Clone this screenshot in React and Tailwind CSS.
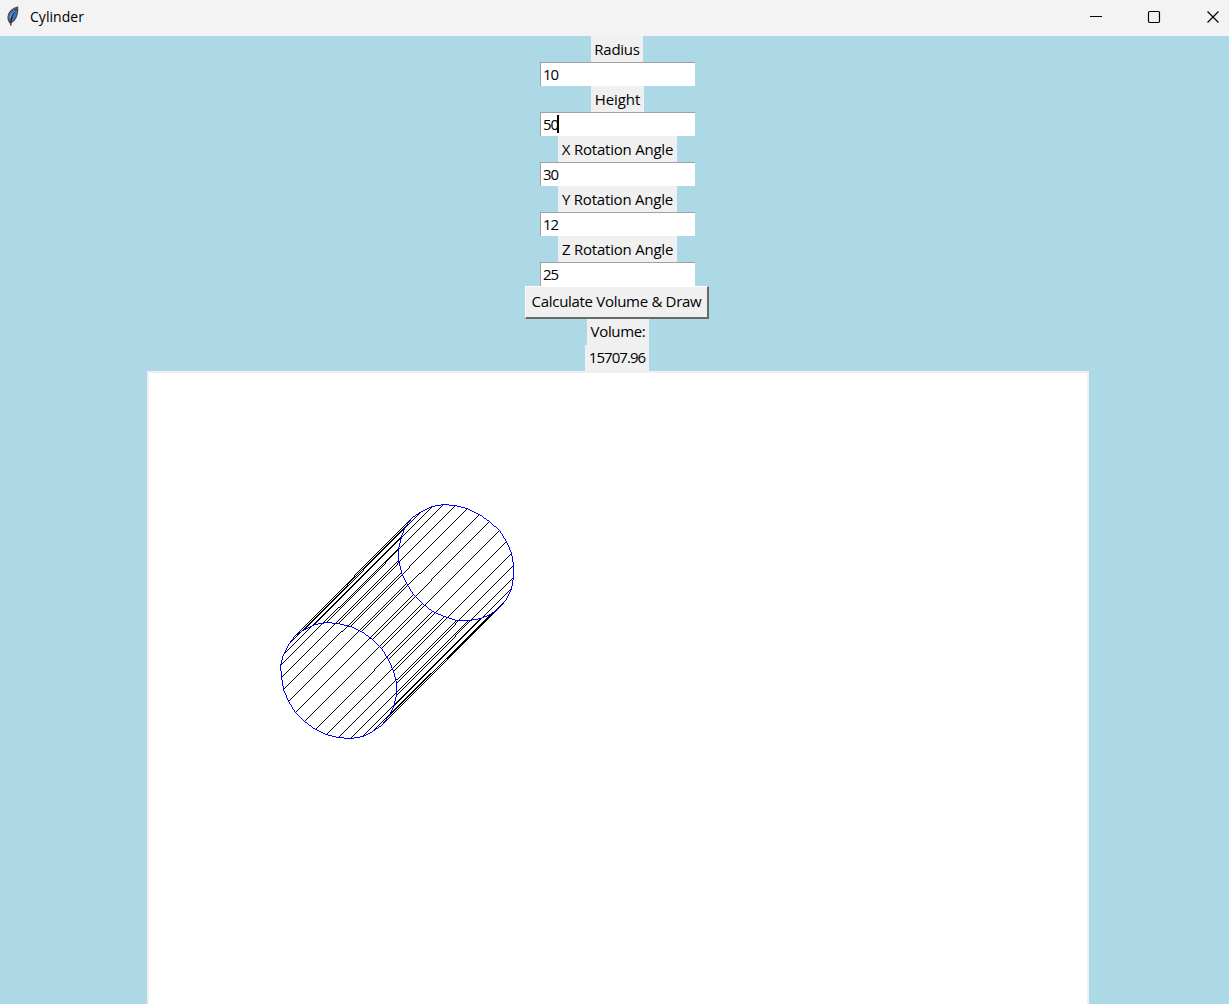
import React from "react";

const SEGMENTS = 30;
const MAJOR = 62.3;
const MINOR = 53.2;
const START = 1.2;

// Points of one end cap, its long axis lying on the falling diagonal.
function cap(cx, cy) {
  return Array.from({ length: SEGMENTS }, (_, i) => {
    const t = ((START + (i * 360) / SEGMENTS) * Math.PI) / 180;
    const u = MAJOR * Math.cos(t);
    const v = MINOR * Math.sin(t);
    return [Math.floor(cx + (u - v) / Math.SQRT2) + 0.5, Math.floor(cy + (u + v) / Math.SQRT2) + 0.5];
  });
}

const bottom = cap(189.6, 307.5);
const top = cap(307.2, 189.8);

// Unit squares along the pixel run from one point to the other.
function pixelRun([x1, y1], [x2, y2]) {
  const steps = Math.max(Math.abs(x2 - x1), Math.abs(y2 - y1));
  let d = "";
  for (let i = 0; i <= steps; i++) {
    const x = Math.round(x1 - 0.5 + ((x2 - x1) * i) / steps);
    const y = Math.round(y1 - 0.5 + ((y2 - y1) * i) / steps);
    d += `M${x} ${y}h1v1h-1z`;
  }
  return d;
}

const outline = (points) => points.map((p, i) => pixelRun(p, points[(i + 1) % points.length])).join("");

function Cylinder() {
  return (
    <svg width="938" height="640" shapeRendering="crispEdges" className="block">
      {bottom.map((p, i) => (
        <path key={i} d={pixelRun(p, top[i])} fill="#000" />
      ))}
      <path d={outline(bottom)} fill="#00f" />
      <path d={outline(top)} fill="#00f" />
    </svg>
  );
}

function Label({ box, text, children }) {
  return (
    <div className={"flex h-[26px] shrink-0 items-center justify-center bg-[#f0f0f0] whitespace-nowrap " + box}>
      <span className={text}>{children}</span>
    </div>
  );
}

function Entry({ value, caret }) {
  return (
    <div className="ml-px flex h-6 w-[155px] shrink-0 items-center border-t border-l border-[#a0a0a0] bg-white pb-px pl-[2px]">
      <span className="tracking-[-1px]">{value}</span>
      {caret && <span className="-ml-px h-[18px] w-[2px] bg-black" />}
    </div>
  );
}

export default function App() {
  return (
    <div className="flex h-[1004px] w-[1229px] flex-col overflow-hidden bg-[#add8e6] font-['Open_Sans',sans-serif] text-[15px] leading-[20px] text-black">
      <header className="flex h-9 shrink-0 items-center bg-[#f3f3f3]">
        <svg width="14" height="22" viewBox="0 0 14 22" className="ml-[6px] -mt-[3px]">
          <path d="M11.600 1.200C7 2 2.200 6 2 11c0 2 .6 4 1.500 5.500C7 16 10 12.500 11 8.500c.6-2.500.9-5 .6-7.300Z" fill="#3977bd" stroke="#554e4b" strokeWidth="1.300" />
          <path d="M10.500 3C6.500 7 4.500 12 4.800 19.500" fill="none" stroke="#222" strokeWidth="1.300" />
          <path d="M9.500 4.500C6.800 6.500 5 9 4.300 12" fill="none" stroke="#76b2ec" strokeWidth="1" />
        </svg>
        <span className="ml-[10px] flex-1 pb-[2px] text-[14px] tracking-[0.05px]">Cylinder</span>
        <div className="-mt-[2px] flex pr-[9px] text-black">
          <svg width="14" height="14" className="mr-[44px]">
            <path d="M1 6.500H13" stroke="currentColor" />
          </svg>
          <svg width="14" height="14" className="mr-[45px]">
            <rect x="1.500" y="1.500" width="11" height="11" rx="1.200" fill="none" stroke="currentColor" strokeWidth="1.200" />
          </svg>
          <svg width="14" height="14">
            <path d="M1.500 1.500L12.500 12.500M12.500 1.500L1.500 12.500" stroke="currentColor" strokeWidth="1.200" />
          </svg>
        </div>
      </header>

      <main className="flex w-[1234px] flex-col items-center">
        <Label box="w-[52px]" text="tracking-[-0.25px]">Radius</Label>
        <Entry value="10" />
        <Label box="w-[53px] -mr-px" text="tracking-[-0.1px]">Height</Label>
        <Entry value="50" caret />
        <Label box="w-[119px] -mr-px" text="tracking-[-0.22px]">X Rotation Angle</Label>
        <Entry value="30" />
        <Label box="w-[119px] -mr-px" text="tracking-[-0.22px]">Y Rotation Angle</Label>
        <Entry value="12" />
        <Label box="w-[119px] -mr-px" text="tracking-[-0.22px]">Z Rotation Angle</Label>
        <Entry value="25" />
        <button className="flex h-[33px] w-[184px] shrink-0 items-center justify-center border-t border-r-2 border-b-2 border-l border-t-white border-r-[#696969] border-b-[#696969] border-l-white bg-[#f0f0f0] pb-[2px] whitespace-nowrap">
          <span className="tracking-[-0.3px]">Calculate Volume &amp; Draw</span>
        </button>
        <Label box="ml-[2px] w-[62px] pb-[2px]" text="tracking-[-0.35px]">Volume:</Label>
        <Label box="w-[64px] pb-[2px]" text="tracking-[-0.95px]">15707.96</Label>
        <div className="ml-[2px] h-[660px] w-[942px] shrink-0 border-2 border-[#f0f0f0] bg-white">
          <Cylinder />
        </div>
      </main>
    </div>
  );
}
